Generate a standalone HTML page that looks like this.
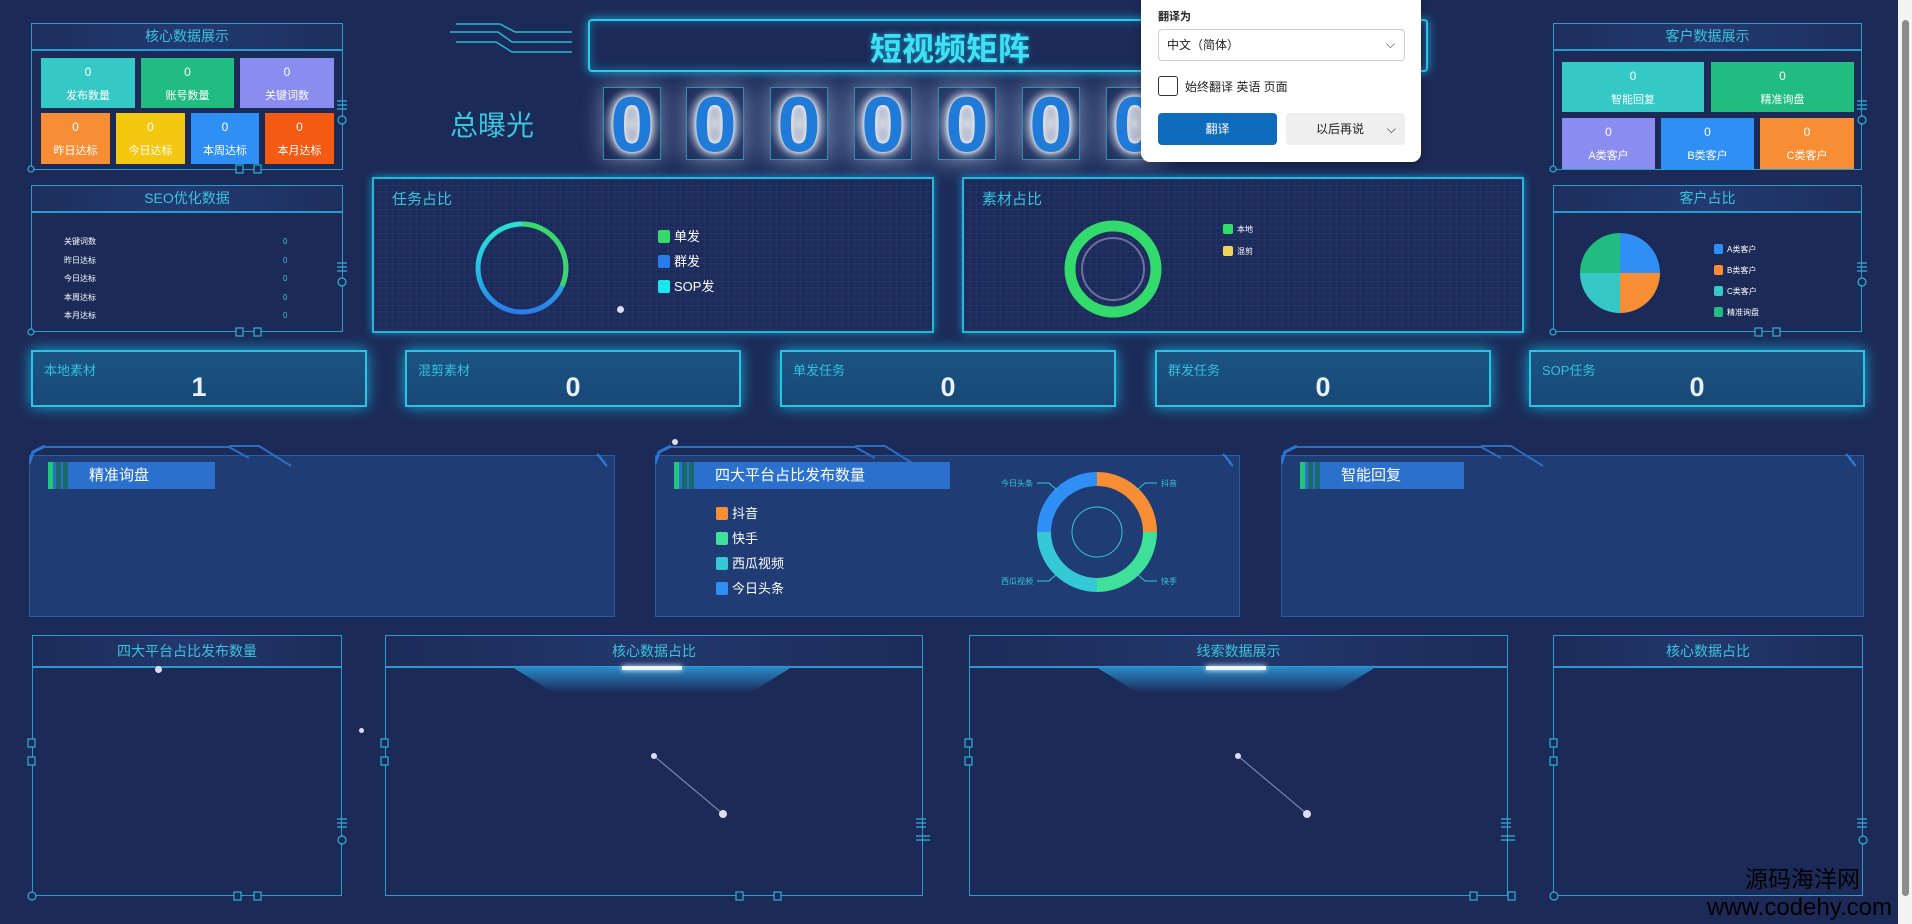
<!DOCTYPE html>
<html><head><meta charset="utf-8">
<style>
*{margin:0;padding:0;box-sizing:border-box}
body{width:1912px;height:924px;overflow:hidden;background:#1c2a57;font-family:"Liberation Sans","Noto Sans CJK SC",sans-serif;position:relative}
.a{position:absolute}
.pf{position:absolute;border:1.5px solid #2a9bcc}
.pt{position:absolute;left:0;right:0;top:0;border-bottom:2px solid #2a9bcc;color:#3bc3dc;text-align:center;font-size:14px;background:linear-gradient(90deg,#1d2f5e,#223a70,#1d2f5e)}
.tile{position:absolute;color:#fff;text-align:center;font-size:11px}
.tile b{display:block;font-weight:normal;font-size:12px;margin-top:7px;margin-bottom:8px}
.dig{position:absolute;top:87px;width:58px;height:73px;border:1px solid #2a8fb0;color:#1f7ad8;font-weight:bold;font-size:78px;line-height:73px;text-align:center;background:radial-gradient(ellipse at center,rgba(255,255,255,.75) 0,rgba(220,235,255,.35) 45%,rgba(255,255,255,0) 75%);box-shadow:0 0 22px rgba(220,235,255,.45);text-shadow:0 0 4px #fff,0 0 12px #fff}
.stat{position:absolute;top:350px;width:336px;height:57px;border:2px solid #29c4e4;background:linear-gradient(180deg,#1a5483,#184876);box-shadow:0 0 14px #1aa6d4}
.stat i{position:absolute;left:11px;top:8px;font-style:normal;color:#35bfe0;font-size:13px}
.stat b{position:absolute;left:0;right:0;top:20px;text-align:center;color:#e8f2ff;font-size:27px}
.big{position:absolute;top:455px;height:162px;background:#1f3c74;border:1px solid #2b5da3}
.hd{position:absolute;top:6px;left:18px;height:27px;background:#2b70cc;color:#fff;font-size:15px;line-height:27px;padding-left:41px}
.hd:before{content:"";position:absolute;left:0;top:0;width:5px;height:27px;background:#22c87a;box-shadow:8px 0 0 #1b6a6a,15px 0 0 #1b6a6a}
.lg{position:absolute;font-size:12px;color:#fff}
.lg span{display:inline-block;width:12px;height:13px;border-radius:2px;vertical-align:-2px;margin-right:4px}
.sm{font-size:8px;color:#fff}
.bp{position:absolute;top:635px;height:261px;border:1.5px solid #2a9bcc}
.bp .pt{height:32px;line-height:31px;font-size:14px;background:linear-gradient(90deg,#1c2b5a,#22386c,#1c2b5a)}
.dot{position:absolute;width:7px;height:7px;border-radius:50%;background:#dde}
</style></head><body>

<div class="a" style="left:560px;top:60px;width:700px;height:130px;background:radial-gradient(ellipse at center,rgba(120,160,220,.25),rgba(28,42,87,0) 70%)"></div>

<!-- core data panel -->
<div class="pf" style="left:31px;top:23px;width:312px;height:147px">
 <div class="pt" style="height:27px;line-height:25px">核心数据展示</div>
</div>
<div class="tile" style="left:41px;top:58px;width:94px;height:50px;background:#35c9c5"><b>0</b>发布数量</div>
<div class="tile" style="left:141px;top:58px;width:93px;height:50px;background:#21bd80"><b>0</b>账号数量</div>
<div class="tile" style="left:240px;top:58px;width:94px;height:50px;background:#8a8cf0"><b>0</b>关键词数</div>
<div class="tile" style="left:41px;top:113px;width:69px;height:51px;background:#f78d35"><b>0</b>昨日达标</div>
<div class="tile" style="left:116px;top:113px;width:69px;height:51px;background:#f4c711"><b>0</b>今日达标</div>
<div class="tile" style="left:191px;top:113px;width:68px;height:51px;background:#2f8ff4"><b>0</b>本周达标</div>
<div class="tile" style="left:265px;top:113px;width:69px;height:51px;background:#f55a13"><b>0</b>本月达标</div>

<!-- SEO panel -->
<div class="pf" style="left:31px;top:185px;width:312px;height:147px">
 <div class="pt" style="height:27px;line-height:25px">SEO优化数据</div>
</div>
<div class="a sm" style="left:64px;top:233px;line-height:18.6px">关键词数<br>昨日达标<br>今日达标<br>本周达标<br>本月达标</div>
<div class="a sm" style="left:283px;top:233px;line-height:18.6px;color:#3bc3dc">0<br>0<br>0<br>0<br>0</div>

<!-- title -->
<svg class="a" style="left:450px;top:18px" width="140" height="42"><g stroke="#2ab8d8" stroke-width="1.5" fill="none"><path d="M6 6H50L65 14H122"/><path d="M0 14H48L62 24H122"/><path d="M6 24H46L62 34H122"/></g></svg>
<div class="a" style="left:588px;top:19px;width:840px;height:53px;border:2px solid #2cc9e8;border-radius:4px;box-shadow:0 0 10px #1fa8d8, inset 0 0 10px #1a6a9a"></div>
<div class="a" style="left:850px;top:24px;width:200px;text-align:center;color:#3fe0f2;font-size:32px;font-weight:bold;text-shadow:0 0 6px #1a9fd0">短视频矩阵</div>
<div class="a" style="left:450px;top:104px;color:#3bc6e0;font-size:28px">总曝光</div>
<div class="dig" style="left:603px">0</div>
<div class="dig" style="left:686px">0</div>
<div class="dig" style="left:770px">0</div>
<div class="dig" style="left:854px">0</div>
<div class="dig" style="left:938px">0</div>
<div class="dig" style="left:1022px">0</div>
<div class="dig" style="left:1106px">0</div>

<!-- task panel -->
<div class="a" style="left:372px;top:177px;width:562px;height:156px;border:2px solid #28b6d8;box-shadow:0 0 8px #1a8fc0;background-color:#1c2b58;background-image:linear-gradient(#22336a 1px,transparent 1px),linear-gradient(90deg,#22336a 1px,transparent 1px);background-size:6px 6px"></div>
<div class="a" style="left:392px;top:188px;color:#3bc3dc;font-size:15px">任务占比</div>
<svg class="a" style="left:470px;top:216px" width="104" height="104"><defs><linearGradient id="g1" x1="0" y1="0" x2="0" y2="1"><stop offset="0" stop-color="#2de0d0"/><stop offset="0.5" stop-color="#25c0e8"/><stop offset="1" stop-color="#2a7de8"/></linearGradient></defs><circle cx="52" cy="52" r="44" fill="none" stroke="url(#g1)" stroke-width="5"/><path d="M52 8A44 44 0 0 1 92 70" fill="none" stroke="#3ad86a" stroke-width="5"/></svg>
<div class="dot" style="left:617px;top:306px"></div>
<div class="lg" style="left:658px;top:224px;line-height:25px;font-size:13px"><span style="background:#3ad86a"></span>单发<br><span style="background:#2a7de8"></span>群发<br><span style="background:#18e6f0"></span>SOP发</div>

<!-- material panel -->
<div class="a" style="left:962px;top:177px;width:562px;height:156px;border:2px solid #28b6d8;box-shadow:0 0 8px #1a8fc0;background-color:#1c2b58;background-image:linear-gradient(#22336a 1px,transparent 1px),linear-gradient(90deg,#22336a 1px,transparent 1px);background-size:6px 6px"></div>
<div class="a" style="left:982px;top:188px;color:#3bc3dc;font-size:15px">素材占比</div>
<svg class="a" style="left:1058px;top:214px" width="110" height="110"><circle cx="55" cy="55" r="43" fill="none" stroke="#33db6c" stroke-width="11"/><circle cx="55" cy="55" r="31" fill="none" stroke="#6f6f9f" stroke-width="2"/></svg>
<div class="lg" style="left:1223px;top:219px;line-height:22px;font-size:8px"><span style="background:#33db6c;width:10px;height:10px"></span>本地<br><span style="background:#f3d45a;width:10px;height:10px"></span>混剪</div>

<!-- customer data -->
<div class="pf" style="left:1553px;top:23px;width:309px;height:147px">
 <div class="pt" style="height:27px;line-height:25px">客户数据展示</div>
</div>
<div class="tile" style="left:1562px;top:62px;width:142px;height:50px;background:#35c9c5"><b>0</b>智能回复</div>
<div class="tile" style="left:1711px;top:62px;width:143px;height:50px;background:#21bd80"><b>0</b>精准询盘</div>
<div class="tile" style="left:1562px;top:118px;width:93px;height:51px;background:#8a8cf0"><b>0</b>A类客户</div>
<div class="tile" style="left:1661px;top:118px;width:93px;height:51px;background:#2f8ff4"><b>0</b>B类客户</div>
<div class="tile" style="left:1760px;top:118px;width:94px;height:51px;background:#f78d35"><b>0</b>C类客户</div>

<div class="pf" style="left:1553px;top:185px;width:309px;height:147px">
 <div class="pt" style="height:27px;line-height:25px">客户占比</div>
</div>
<svg class="a" style="left:1580px;top:233px" width="80" height="80"><path d="M40 40V0A40 40 0 0 1 80 40Z" fill="#2f8ff4"/><path d="M40 40H80A40 40 0 0 1 40 80Z" fill="#f78d35"/><path d="M40 40V80A40 40 0 0 1 0 40Z" fill="#35c9c5"/><path d="M40 40H0A40 40 0 0 1 40 0Z" fill="#21bd80"/></svg>
<div class="lg" style="left:1714px;top:239px;line-height:21px;font-size:8px"><span style="background:#2f8ff4;width:9px;height:10px"></span>A类客户<br><span style="background:#f78d35;width:9px;height:10px"></span>B类客户<br><span style="background:#35c9c5;width:9px;height:10px"></span>C类客户<br><span style="background:#21bd80;width:9px;height:10px"></span>精准询盘</div>

<!-- popup -->
<div class="a" style="left:1141px;top:0;width:280px;height:162px;background:#fff;border-radius:0 0 9px 9px;box-shadow:0 2px 8px rgba(0,0,0,.3)">
 <div class="a" style="left:17px;top:8px;font-size:11px;font-weight:bold;color:#222">翻译为</div>
 <div class="a" style="left:17px;top:29px;width:247px;height:32px;border:1px solid #ccc;border-radius:4px;font-size:12px;line-height:30px;padding-left:8px;color:#222">中文（简体）<span style="position:absolute;right:9px;top:-1px;color:#444">⌵</span></div>
 <div class="a" style="left:17px;top:76px;width:20px;height:20px;border:1.5px solid #333;border-radius:3px"></div>
 <div class="a" style="left:44px;top:78px;font-size:12px;color:#222">始终翻译 英语 页面</div>
 <div class="a" style="left:17px;top:113px;width:119px;height:32px;background:#0f6cbd;border-radius:4px;color:#fff;font-size:12px;line-height:32px;text-align:center">翻译</div>
 <div class="a" style="left:145px;top:113px;width:119px;height:32px;background:#efefef;border-radius:4px;color:#222;font-size:12px;line-height:32px;padding-left:30px">以后再说<span style="position:absolute;right:9px;top:0">⌵</span></div>
</div>

<!-- stat boxes -->
<div class="stat" style="left:31px"><i>本地素材</i><b>1</b></div>
<div class="stat" style="left:405px"><i>混剪素材</i><b>0</b></div>
<div class="stat" style="left:780px"><i>单发任务</i><b>0</b></div>
<div class="stat" style="left:1155px"><i>群发任务</i><b>0</b></div>
<div class="stat" style="left:1529px"><i>SOP任务</i><b>0</b></div>

<!-- big panels -->
<div class="big" style="left:29px;width:586px"><div class="hd" style="width:167px">精准询盘</div></div>
<svg class="a" style="left:29px;top:438px" width="586" height="30"><path d="M0 26L4 14L16 8" stroke="#2b74d0" stroke-width="3" fill="none"/><path d="M16 9H200L220 20M200 8H230L262 28" stroke="#2b6fc4" stroke-width="2" fill="none"/><path d="M568 16l5 5M571 20l5 5M574 24l4 4" stroke="#2b7ad8" stroke-width="2"/></svg>
<div class="big" style="left:655px;width:585px"><div class="hd" style="width:276px">四大平台占比发布数量</div></div>
<svg class="a" style="left:655px;top:438px" width="586" height="30"><path d="M0 26L4 14L16 8" stroke="#2b74d0" stroke-width="3" fill="none"/><path d="M16 9H200L220 20M200 8H230L262 28" stroke="#2b6fc4" stroke-width="2" fill="none"/><path d="M568 16l5 5M571 20l5 5M574 24l4 4" stroke="#2b7ad8" stroke-width="2"/></svg>
<div class="big" style="left:1281px;width:583px"><div class="hd" style="width:164px">智能回复</div></div>
<svg class="a" style="left:1281px;top:438px" width="586" height="30"><path d="M0 26L4 14L16 8" stroke="#2b74d0" stroke-width="3" fill="none"/><path d="M16 9H200L220 20M200 8H230L262 28" stroke="#2b6fc4" stroke-width="2" fill="none"/><path d="M565 16l5 5M568 20l5 5M571 24l4 4" stroke="#2b7ad8" stroke-width="2"/></svg>
<div class="dot" style="left:672px;top:439px;width:6px;height:6px"></div>

<div class="lg" style="left:716px;top:501px;line-height:25px;font-size:13px"><span style="background:#f78d35"></span>抖音<br><span style="background:#3ee09a"></span>快手<br><span style="background:#35c9d5"></span>西瓜视频<br><span style="background:#2f8ff4"></span>今日头条</div>
<svg class="a" style="left:990px;top:470px" width="220" height="124"><g transform="translate(107,62)">
<circle r="58" fill="none" stroke="#35c9d5" stroke-width="1"/>
<path d="M0 -53A53 53 0 0 1 53 0" stroke="#f78d35" stroke-width="14" fill="none"/>
<path d="M53 0A53 53 0 0 1 0 53" stroke="#3ee09a" stroke-width="14" fill="none"/>
<path d="M0 53A53 53 0 0 1 -53 0" stroke="#35c9d5" stroke-width="14" fill="none"/>
<path d="M-53 0A53 53 0 0 1 0 -53" stroke="#2f8ff4" stroke-width="14" fill="none"/>
<circle r="25" fill="none" stroke="#35c9d5" stroke-width="1"/>
<path d="M-40 -42L-48 -49H-60M40 -42L48 -49H60M-40 42L-48 49H-60M40 42L48 49H60" stroke="#35c9d5" fill="none"/>
<g fill="#35c9d5" font-size="8"><text x="-96" y="-46">今日头条</text><text x="64" y="-46">抖音</text><text x="-96" y="52">西瓜视频</text><text x="64" y="52">快手</text></g></g></svg>

<!-- bottom panels -->
<div class="bp" style="left:32px;width:310px"><div class="pt">四大平台占比发布数量</div></div>
<div class="bp" style="left:385px;width:538px"><div class="pt">核心数据占比</div></div>
<div class="bp" style="left:969px;width:539px"><div class="pt">线索数据展示</div></div>
<div class="bp" style="left:1553px;width:310px"><div class="pt">核心数据占比</div></div>
<div class="a" style="left:512px;top:667px;width:280px;height:26px;background:linear-gradient(180deg,#2a8ac8,rgba(30,60,110,0));clip-path:polygon(0 0,100% 0,85% 100%,15% 100%)"></div>
<div class="a" style="left:622px;top:666px;width:60px;height:4px;background:#e8f8ff;box-shadow:0 0 6px #fff"></div>
<div class="a" style="left:1096px;top:667px;width:280px;height:26px;background:linear-gradient(180deg,#2a8ac8,rgba(30,60,110,0));clip-path:polygon(0 0,100% 0,85% 100%,15% 100%)"></div>
<div class="a" style="left:1206px;top:666px;width:60px;height:4px;background:#e8f8ff;box-shadow:0 0 6px #fff"></div>
<div class="dot" style="left:155px;top:666px"></div>
<div class="dot" style="left:359px;top:728px;width:5px;height:5px"></div>
<svg class="a" style="left:650px;top:752px" width="80" height="70"><line x1="4" y1="4" x2="73" y2="62" stroke="#8a9ac0"/><circle cx="4" cy="4" r="3" fill="#dde"/><circle cx="73" cy="62" r="4" fill="#dde"/></svg>
<svg class="a" style="left:1234px;top:752px" width="80" height="70"><line x1="4" y1="4" x2="73" y2="62" stroke="#8a9ac0"/><circle cx="4" cy="4" r="3" fill="#dde"/><circle cx="73" cy="62" r="4" fill="#dde"/></svg>

<!-- side markers -->
<svg class="a" style="left:0;top:0" width="1912" height="924"><g stroke="#2fb0d8" fill="#1c2a57" stroke-width="1.2">
<rect x="28" y="739" width="7" height="8"/><rect x="28" y="757" width="7" height="8"/><circle cx="342" cy="840" r="4"/><circle cx="32" cy="896" r="4"/><rect x="234" y="892" width="7" height="8"/><rect x="254" y="892" width="7" height="8"/>
<rect x="381" y="739" width="7" height="8"/><rect x="381" y="757" width="7" height="8"/><rect x="736" y="892" width="7" height="8"/><rect x="774" y="892" width="7" height="8"/>
<rect x="965" y="739" width="7" height="8"/><rect x="965" y="757" width="7" height="8"/><rect x="1470" y="892" width="7" height="8"/><rect x="1508" y="892" width="7" height="8"/>
<rect x="1550" y="739" width="7" height="8"/><rect x="1550" y="757" width="7" height="8"/><circle cx="1863" cy="840" r="4"/><circle cx="1554" cy="896" r="4"/>
<circle cx="342" cy="120" r="4"/><circle cx="31" cy="169" r="3"/><rect x="236" y="165" width="7" height="8"/><rect x="254" y="165" width="7" height="8"/>
<circle cx="342" cy="282" r="4"/><circle cx="31" cy="332" r="3"/><rect x="236" y="328" width="7" height="8"/><rect x="254" y="328" width="7" height="8"/>
<circle cx="1862" cy="120" r="4"/><circle cx="1553" cy="169" r="3"/><circle cx="1862" cy="282" r="4"/><circle cx="1553" cy="332" r="3"/><rect x="1755" y="328" width="7" height="8"/><rect x="1773" y="328" width="7" height="8"/>
<path d="M337 101h10M337 105h10M337 109h10M337 263h10M337 267h10M337 271h10M1857 101h10M1857 105h10M1857 109h10M1857 263h10M1857 267h10M1857 271h10M337 819h10M337 823h10M337 827h10M916 819h10M916 823h10M916 827h10M916 836h14M916 840h14M1501 819h10M1501 823h10M1501 827h10M1501 836h14M1501 840h14M1857 819h10M1857 823h10M1857 827h10"/>
</g></svg>

<!-- watermark -->
<div class="a" style="left:1745px;top:866px;font-size:23px;color:#000;line-height:26px">源码海洋网</div>
<div class="a" style="left:1707px;top:894px;font-size:24px;color:#000;line-height:28px">www.codehy.com</div>

<!-- scrollbar -->
<div class="a" style="left:1898px;top:0;width:14px;height:924px;background:#f3f3f3"></div>
<div class="a" style="left:1902px;top:20px;width:7px;height:876px;background:#8c8c8c;border-radius:4px"></div>
</body></html>
